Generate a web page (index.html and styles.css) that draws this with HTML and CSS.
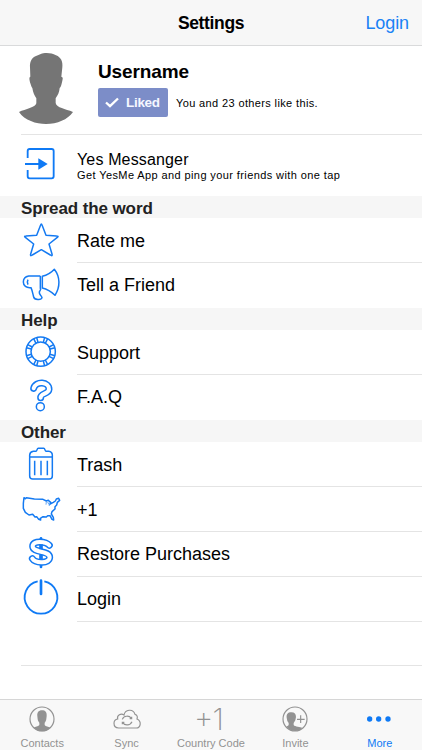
FILE: index.html
```html
<!DOCTYPE html>
<html lang="en">
<head>
    <meta charset="UTF-8">
    <meta name="viewport" content="width=device-width, initial-scale=1.0">
    <title>Settings</title>
    <link rel="stylesheet" href="styles.css">
</head>
<body>
    <div class="screen">
        <header class="navbar">
            <h1>Settings</h1>
            <a class="nav-login">Login</a>
        </header>

        <main class="content">
            <section class="profile">
                <svg class="avatar" viewBox="0 0 162 213">
                    <path d="M83 0C68 0 62 5 51 9C37 14 32 28 33 43L34 71C29 73 32 83 34 91C36 98 38 103 40 105C42 119 47 128 52 136V151C49 164 20 168 0 177C17 202 51 213 81 213C115 213 146 200 162 177C139 167 113 165 110 150V136C117 126 121 117 122 105C126 102 128 92 130 83C132 75 132 73 127 71L130 43C132 26 126 13 111 7C102 2 94 0 83 0Z"/>
                </svg>
                <div class="profile-info">
                    <h2>Username</h2>
                    <div class="like-row">
                        <button class="liked" type="button">
                            <svg class="check" viewBox="0 0 42 32"><path d="M3 16L15 27L39 4"/></svg>
                            <span>Liked</span>
                        </button>
                        <span class="like-text">You and 23 others like this.</span>
                    </div>
                </div>
            </section>

            <div class="row app-row">
                <svg class="icon" viewBox="0 0 120 120">
                    <path class="thick" d="M20 39V18Q20 12 26 12H92Q98 12 98 18V94Q98 100 92 100H26Q20 100 20 94V75M12 57H56"/>
                    <path class="solid" d="M52 40L80 57L52 74Z"/>
                </svg>
                <div class="app-text">
                    <span class="app-name">Yes Messanger</span>
                    <span class="app-desc">Get YesMe App and ping your friends with one tap</span>
                </div>
            </div>

            <h3 class="section-title">Spread the word</h3>
            <div class="row">
                <svg class="icon" viewBox="0 0 120 120">
                    <path d="M61 9Q62 9 64 14L75 43L107 45Q114 45 109 49L84 69L93 99Q95 107 88 102L61 86L34 102Q27 107 29 99L38 69L13 49Q8 45 15 45L47 43L58 14Q60 9 61 9Z"/>
                </svg>
                <span class="label">Rate me</span>
            </div>
            <div class="row">
                <svg class="icon" viewBox="0 0 120 120">
                    <path d="M57 30H23C12 32 7 39 7 48C7 59 16 67 30 65C34 74 36 85 38 93C40 102 61 103 63 95C61 87 54 87 55 78C55 74 62 72 58 66M58 29V68M64 31C78 28 91 20 100 10C118 33 118 63 102 88C91 77 78 69 64 66ZM21 41Q17 48 21 56"/>
                </svg>
                <span class="label">Tell a Friend</span>
            </div>

            <h3 class="section-title">Help</h3>
            <div class="row">
                <svg class="icon" viewBox="0 0 120 120">
                    <circle cx="59" cy="56" r="44"/>
                    <circle cx="59" cy="56" r="29"/>
                    <path d="M47 13L51 28M71 13L67 28M47 99L51 84M71 99L67 84M16 44L31 48M16 68L31 64M102 44L87 48M102 68L87 64"/>
                    <path d="M38 17L45 31M80 17L73 31M38 95L45 81M80 95L73 81M20 35L34 42M20 77L34 70M98 35L84 42M98 77L84 70"/>
                </svg>
                <span class="label">Support</span>
            </div>
            <div class="row">
                <svg class="icon" viewBox="0 0 120 120">
                    <path class="outer" d="M38 31C44 8 85 11 84 34C83 49 58 45 59 59"/>
                    <path class="inner" d="M38 31C44 8 85 11 84 34C83 49 58 45 59 59"/>
                    <circle cx="58" cy="86" r="12"/>
                </svg>
                <span class="label">F.A.Q</span>
            </div>

            <h3 class="section-title">Other</h3>
            <div class="row">
                <svg class="icon" viewBox="0 0 120 120">
                    <path d="M26 36V30Q27 20 37 19H45C49 18 47 10 52 10H68C73 10 71 18 75 19H83Q94 20 94 31V36ZM26 37V93Q26 102 35 102H85Q94 102 94 93V37M41 47V91M60 47V91M79 47V91"/>
                </svg>
                <span class="label">Trash</span>
            </div>
            <div class="row">
                <svg class="icon" viewBox="0 0 120 120">
                    <path d="M9 23L13 26L16 23L40 27L66 28L76 33L82 31L89 37L87 42L97 37L103 33L106 27L113 25L116 31L109 37L107 45L102 50L102 57L93 65L91 72L97 82L98 90L93 88L87 77L80 77L76 81L66 80L58 85L59 90L53 88L47 80L42 81L35 73L24 75L13 67L7 55L7 40Z"/>
                    <path class="thin" d="M76 35L75 44M80 36L84 44M87 42L84 48"/>
                </svg>
                <span class="label">+1</span>
            </div>
            <div class="row">
                <svg class="icon" viewBox="0 0 120 120">
                    <path class="bar" d="M60 13V99"/>
                    <path class="outer" d="M85 34C75 22 35 18 35 37C35 58 86 48 86 70C86 89 44 89 34 74"/>
                    <path class="inner" d="M85 34C75 22 35 18 35 37C35 58 86 48 86 70C86 89 44 89 34 74"/>
                    <path d="M57 31V46M63 31V46M57 62V78M63 62V78"/>
                </svg>
                <span class="label">Restore Purchases</span>
            </div>
            <div class="row">
                <svg class="icon" viewBox="0 0 120 120">
                    <path class="thick" d="M50 7A49 49 0 1 0 70 7"/>
                    <path class="bar" d="M60 5V45"/>
                </svg>
                <span class="label">Login</span>
            </div>
            <div class="empty-row"></div>
        </main>

        <nav class="tabbar">
            <a class="tab">
                <svg class="tab-icon" viewBox="0 0 90 84">
                    <circle cx="45" cy="42" r="36"/>
                    <path class="fill" d="M45 16C34 16 30 23 31 33L32 43C33 49 35 50 37 53V60C33 65 25 65 20 68C34 82 57 82 70 68C64 65 56 65 53 60V53C56 50 57 47 58 42L59 33C60 22 55 16 45 16Z"/>
                </svg>
                <span>Contacts</span>
            </a>
            <a class="tab">
                <svg class="tab-icon" viewBox="0 0 90 84">
                    <path d="M20 69C10 69 6 62 6 55C6 47 11 43 17 42C14 31 27 23 36 30C39 14 63 9 69 28C76 29 77 37 75 42C90 49 86 69 73 69Z"/>
                    <path d="M31 43C35 32 51 30 58 40M60 50C54 62 39 63 32 53M59 35V41H53M31 58V52H37"/>
                </svg>
                <span>Sync</span>
            </a>
            <a class="tab">
                <span class="plus-one">+1</span>
                <span>Country Code</span>
            </a>
            <a class="tab">
                <svg class="tab-icon" viewBox="0 0 90 84">
                    <circle cx="45" cy="42" r="36"/>
                    <path class="fill" d="M34 22C23 22 19 28 20 38L22 48L26 54V60C23 63 21 64 19 65C32 81 56 82 67 69C61 65 45 66 41 60V54L46 46L48 36C48 27 44 22 34 22Z"/>
                    <path d="M62 31V54M51 43H74"/>
                </svg>
                <span>Invite</span>
            </a>
            <a class="tab active">
                <svg class="tab-icon" viewBox="0 0 90 84">
                    <circle class="fill" cx="14" cy="42" r="8"/>
                    <circle class="fill" cx="41" cy="42" r="8"/>
                    <circle class="fill" cx="69" cy="42" r="8"/>
                </svg>
                <span>More</span>
            </a>
        </nav>
    </div>
</body>
</html>
```
FILE: styles.css
```css
* {
    box-sizing: border-box;
}
body {
    margin: 0;
    font-family: "Liberation Sans", Arial, sans-serif;
    color: #000;
    background: #fff;
}
h1, h2, h3 {
    margin: 0;
}
.screen {
    display: flex;
    flex-direction: column;
    height: 750px;
    overflow: hidden;
}
.navbar {
    display: grid;
    grid-template-columns: 1fr auto 1fr;
    align-items: center;
    height: 46px;
    padding: 2px 13px 0;
    background: #f7f7f7;
    border-bottom: 1px solid #d9dadb;
}
.navbar h1 {
    grid-column: 2;
    font-size: 17.5px;
    letter-spacing: -0.35px;
}
.nav-login {
    justify-self: end;
    font-size: 18px;
    letter-spacing: -0.1px;
    color: #1a82f5;
}
.content {
    flex: 1;
}
.profile {
    display: flex;
    height: 88px;
    padding: 7px 0 0 19px;
}
.avatar {
    width: 54px;
    height: 71px;
    margin-right: 25px;
    fill: #757575;
}
.profile-info h2 {
    padding-top: 1px;
    margin-top: 7px;
    font-size: 19px;
    line-height: 22px;
    letter-spacing: -0.1px;
}
.like-row {
    display: flex;
    align-items: center;
    gap: 8px;
    margin-top: 5px;
}
.liked {
    display: flex;
    align-items: center;
    gap: 7px;
    width: 70px;
    height: 29px;
    padding: 0 0 0 7px;
    font: bold 13.5px "Liberation Sans", Arial, sans-serif;
    letter-spacing: -0.3px;
    color: #f5f7ff;
    background: #7c8dc8;
    border: none;
    border-radius: 2px;
}
.check {
    width: 14px;
    height: 11px;
    fill: none;
    stroke: #fff;
    stroke-width: 7;
}
.like-text {
    font-size: 11px;
    letter-spacing: 0.37px;
}
.row {
    display: flex;
    align-items: center;
    height: 44.8px;
    padding-left: 21px;
}
.icon {
    width: 40px;
    height: 40px;
    margin-right: 16px;
    fill: none;
    stroke: #147af2;
    stroke-width: 4.5;
    stroke-linejoin: round;
}
.icon .thick {
    stroke: #0f7af5;
    stroke-width: 5.5;
}
.icon .bar {
    stroke: #0f7af5;
    stroke-width: 8;
    stroke-linecap: round;
}
.icon .thin {
    stroke-width: 2;
}
.icon .solid {
    fill: #0f7af5;
    stroke: none;
}
/* outlined strokes: blue line with a thinner white one on top */
.icon .outer {
    stroke-width: 21;
    stroke-linecap: round;
}
.icon .inner {
    stroke: #fff;
    stroke-width: 12;
    stroke-linecap: round;
}
.label {
    display: flex;
    flex: 1;
    align-items: center;
    height: 100%;
    padding-top: 2px;
    font-size: 18px;
    border-bottom: 1px solid #e4e4e4;
}
.row:has(+ .section-title) .label {
    padding-top: 0;
    border-bottom: none;
}
.app-row {
    height: 62px;
    background: linear-gradient(#e4e4e4, #e4e4e4) 21px 0 / 100% 1px no-repeat;
}
.app-text {
    display: flex;
    flex-direction: column;
    padding-top: 2px;
}
.app-name {
    font-size: 16px;
    line-height: 17px;
    letter-spacing: 0.15px;
}
.app-desc {
    font-size: 11px;
    line-height: 14px;
    letter-spacing: 0.4px;
}
.section-title {
    height: 22.4px;
    padding-left: 21px;
    font-size: 17px;
    line-height: 25px;
    letter-spacing: -0.1px;
    color: #222;
    background: #f6f6f6;
}
.empty-row {
    height: 44.8px;
    margin-left: 21px;
    border-bottom: 1px solid #e4e4e4;
}
.tabbar {
    display: grid;
    grid-template-columns: repeat(5, 1fr);
    height: 51px;
    background: #f8f8f8;
    border-top: 1px solid #d6d6d6;
}
.tab {
    display: flex;
    flex-direction: column;
    align-items: center;
    padding-top: 5px;
    font-size: 11px;
    line-height: 14px;
    color: #929292;
}
.tab-icon {
    width: 30px;
    height: 28px;
    margin-bottom: 3px;
    fill: none;
    stroke: #929292;
    stroke-width: 3.5;
}
.tab-icon .fill {
    fill: #929292;
    stroke: none;
}
.tab.active {
    color: #0f7af5;
}
.tab.active .fill {
    fill: #0f7af5;
}
.plus-one {
    height: 28px;
    margin: 0 5px 3px 0;
    font-family: Inter, Roboto, sans-serif;
    font-size: 30px;
    font-weight: 200;
    font-feature-settings: "case";
    line-height: 28px;
    letter-spacing: -1px;
}
```
